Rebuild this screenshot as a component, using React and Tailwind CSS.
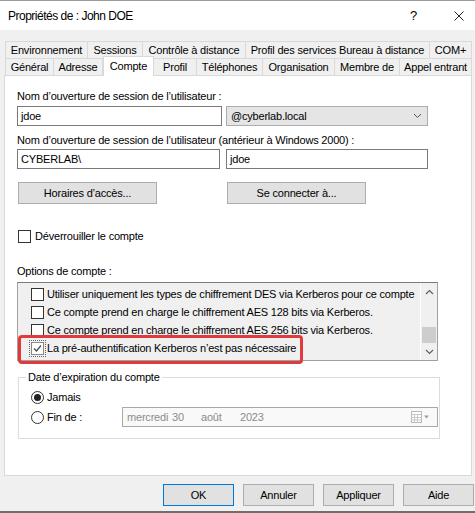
import React from "react";

const TABS_TOP = [
  ["Environnement", "w-[83px] border-l"],
  ["Sessions", "w-[55px]"],
  ["Contrôle à distance", "w-[103px]"],
  ["Profil des services Bureau à distance", "w-[184px]"],
  ["COM+", "w-[42px]"],
];

const TABS_BOTTOM = [
  ["Général", "w-[49px] border-l"],
  ["Adresse", "w-[49px]"],
  ["Compte", "w-[51px]", true],
  ["Profil", "w-[43px]"],
  ["Téléphones", "w-[66px]"],
  ["Organisation", "w-[72px]"],
  ["Membre de", "w-[65px]"],
  ["Appel entrant", "w-[72px]"],
];

const OPTIONS = [
  ["Utiliser uniquement les types de chiffrement DES via Kerberos pour ce compte", false],
  ["Ce compte prend en charge le chiffrement AES 128 bits via Kerberos.", false],
  ["Ce compte prend en charge le chiffrement AES 256 bits via Kerberos.", false],
  ["La pré-authentification Kerberos n’est pas nécessaire", true],
];

function Box({ checked }) {
  return (
    <span
      className={`w-[13px] h-[13px] shrink-0 bg-white border flex items-center justify-center ${
        checked
          ? "border-[#8a8a8a] outline-1 outline-dotted outline-offset-1 outline-[#666]"
          : "border-[#333]"
      }`}
    >
      {checked && (
        <svg width="11" height="11" viewBox="0 0 11 11">
          <path d="M2 5.5 L4.5 8 L9 2.5" stroke="#4a4a4a" strokeWidth="1.2" fill="none" />
        </svg>
      )}
    </span>
  );
}

function Radio({ on }) {
  return (
    <span className="w-[13px] h-[13px] shrink-0 rounded-full bg-white border border-[#333] flex items-center justify-center">
      {on && <span className="w-[7px] h-[7px] rounded-full bg-[#222]" />}
    </span>
  );
}

function Btn({ children, w = "w-[139px]", focus }) {
  return (
    <div
      className={`${w} h-[22px] bg-[#e1e1e1] border flex items-center justify-center ${
        focus ? "border-[#0078d7]" : "border-[#adadad]"
      }`}
    >
      {children}
    </div>
  );
}

function Chevron({ up }) {
  return (
    <svg width="9" height="6" viewBox="0 0 9 6">
      <path d={up ? "M1 5 L4.5 1.5 L8 5" : "M1 1 L4.5 4.5 L8 1"} stroke="#606060" strokeWidth="1.2" fill="none" />
    </svg>
  );
}

export default function App() {
  return (
    <div className="w-[475px] h-[513px] bg-[#f0f0f0] border-t border-t-[#9b9b9b] border-b-2 border-b-[#6e6e6e] flex flex-col font-['Liberation_Sans',Arial,sans-serif] text-black text-[11px] leading-[14px] tracking-[-0.2px]">
      {/* title bar */}
      <div className="h-[29px] shrink-0 bg-white flex items-center pl-[8px]">
        <span className="text-[12px] tracking-[-0.5px]">Propriétés de : John DOE</span>
        <span className="ml-auto mr-[37px] text-[13px]">?</span>
        <svg className="mr-[11px]" width="10" height="10" viewBox="0 0 10 10">
          <path d="M0.5 0.5 L9.5 9.5 M9.5 0.5 L0.5 9.5" stroke="#222" strokeWidth="1" />
        </svg>
      </div>

      {/* tabs */}
      <div className="mt-[11px] ml-[5px] flex h-[17px]">
        {TABS_TOP.map(([t, c]) => (
          <div key={t} className={`${c} h-[17px] border-t border-r border-[#d9d9d9] flex items-center justify-center whitespace-nowrap`}>
            {t}
          </div>
        ))}
      </div>
      <div className="ml-[5px] flex h-[17px] items-start">
        {TABS_BOTTOM.map(([t, c, sel]) =>
          sel ? (
            <div key={t} className={`${c} relative z-10 -mt-[2px] h-[20px] bg-white border-t border-r border-l border-[#d9d9d9] flex justify-center pt-[2px] whitespace-nowrap`}>
              {t}
            </div>
          ) : (
            <div key={t} className={`${c} h-[17px] border-t border-r border-[#d9d9d9] flex items-center justify-center whitespace-nowrap`}>
              {t}
            </div>
          )
        )}
      </div>

      {/* panel */}
      <div className="ml-[4px] w-[468px] h-[401px] shrink-0 bg-white border border-[#d9d9d9] pl-[12px] pt-[13px]">
        <div>Nom d’ouverture de session de l’utilisateur :</div>
        <div className="mt-[3px] flex gap-[4px]">
          <div className="w-[205px] h-[20px] border border-[#7a7a7a] flex items-center pl-[3px]">jdoe</div>
          <div className="w-[202px] h-[20px] border border-[#adadad] bg-[#e5e5e5] flex items-center pl-[4px] pr-[5px]">
            <span>@cyberlab.local</span>
            <svg className="ml-auto" width="9" height="6" viewBox="0 0 9 6">
              <path d="M1 1 L4.5 4.5 L8 1" stroke="#555" strokeWidth="1" fill="none" />
            </svg>
          </div>
        </div>
        <div className="mt-[7px]">Nom d’ouverture de session de l’utilisateur (antérieur à Windows 2000) :</div>
        <div className="mt-[2px] flex gap-[6px]">
          <div className="w-[203px] h-[20px] border border-[#7a7a7a] flex items-center pl-[3px]">CYBERLAB\</div>
          <div className="w-[202px] h-[20px] border border-[#7a7a7a] flex items-center pl-[3px]">jdoe</div>
        </div>
        <div className="mt-[13px] flex gap-[70px] pl-[1px]">
          <Btn>Horaires d’accès...</Btn>
          <Btn>Se connecter à...</Btn>
        </div>

        <div className="mt-[25px] flex items-center gap-[4px] pl-[1px]">
          <Box />
          <span>Déverrouiller le compte</span>
        </div>

        <div className="mt-[21px]">Options de compte :</div>
        <div className="relative mt-[4px] w-[421px] h-[79px] bg-[#f0f0f0] border border-[#a0a0a0] border-t-[#7a7a7a] flex">
          <div className="flex-1 pt-[2px] pl-[13px] overflow-hidden">
            {OPTIONS.map(([t, c]) => (
              <div key={t} className="h-[18px] flex items-center gap-[3px] whitespace-nowrap">
                <Box checked={c} />
                <span>{t}</span>
              </div>
            ))}
          </div>
          <div className="w-[17px] border-l border-l-white flex flex-col items-center">
            <div className="h-[17px] flex items-center">
              <Chevron up />
            </div>
            <div className="flex-1 w-full flex flex-col justify-end">
              <div className="mx-[1px] h-[16px] bg-[#cdcdcd]" />
            </div>
            <div className="h-[17px] flex items-center">
              <Chevron />
            </div>
          </div>
          <div className="absolute left-0 top-[52px] w-[285px] h-[29px] border-[3px] border-[#e2393d] rounded-[4px]" />
        </div>

        {/* expiration group */}
        <div className="relative mt-[16px] ml-[1px] w-[422px] h-[62px] border border-[#dcdcdc] pt-[9px] pl-[12px]">
          <span className="absolute left-[7px] -top-[8px] bg-white px-[2px]">Date d’expiration du compte</span>
          <div className="h-[20px] flex items-center gap-[3px]">
            <Radio on />
            <span>Jamais</span>
          </div>
          <div className="h-[20px] flex items-center">
            <div className="w-[91px] flex items-center gap-[3px]">
              <Radio />
              <span>Fin de :</span>
            </div>
            <div className="w-[316px] h-[20px] border border-[#a8a8a8] bg-[#f9f9f9] flex items-center pl-[4px] pr-[6px] text-[#8c8c8c]">
              <span className="w-[45px]">mercredi</span>
              <span className="w-[29px]">30</span>
              <span className="w-[39px]">août</span>
              <span>2023</span>
              <svg className="ml-auto" width="20" height="12" viewBox="0 0 20 12">
                <rect x="0.5" y="0.5" width="10" height="11" fill="#fff" stroke="#b8b8b8" />
                <path d="M0.5 3.5 H10.5 M0.5 6.5 H10.5 M0.5 9 H10.5 M3.5 3.5 V11.5 M6.5 3.5 V11.5" stroke="#c8c8c8" />
                <path d="M13 4.5 L18 4.5 L15.5 7.5 Z" fill="#a0a0a0" />
              </svg>
            </div>
          </div>
        </div>
      </div>

      {/* buttons */}
      <div className="mt-[8px] flex justify-end gap-[9px] pr-[1px]">
        <Btn w="w-[71px] h-[20px]" focus>OK</Btn>
        <Btn w="w-[71px] h-[20px]">Annuler</Btn>
        <Btn w="w-[71px] h-[20px]">Appliquer</Btn>
        <Btn w="w-[71px] h-[20px]">Aide</Btn>
      </div>
    </div>
  );
}
